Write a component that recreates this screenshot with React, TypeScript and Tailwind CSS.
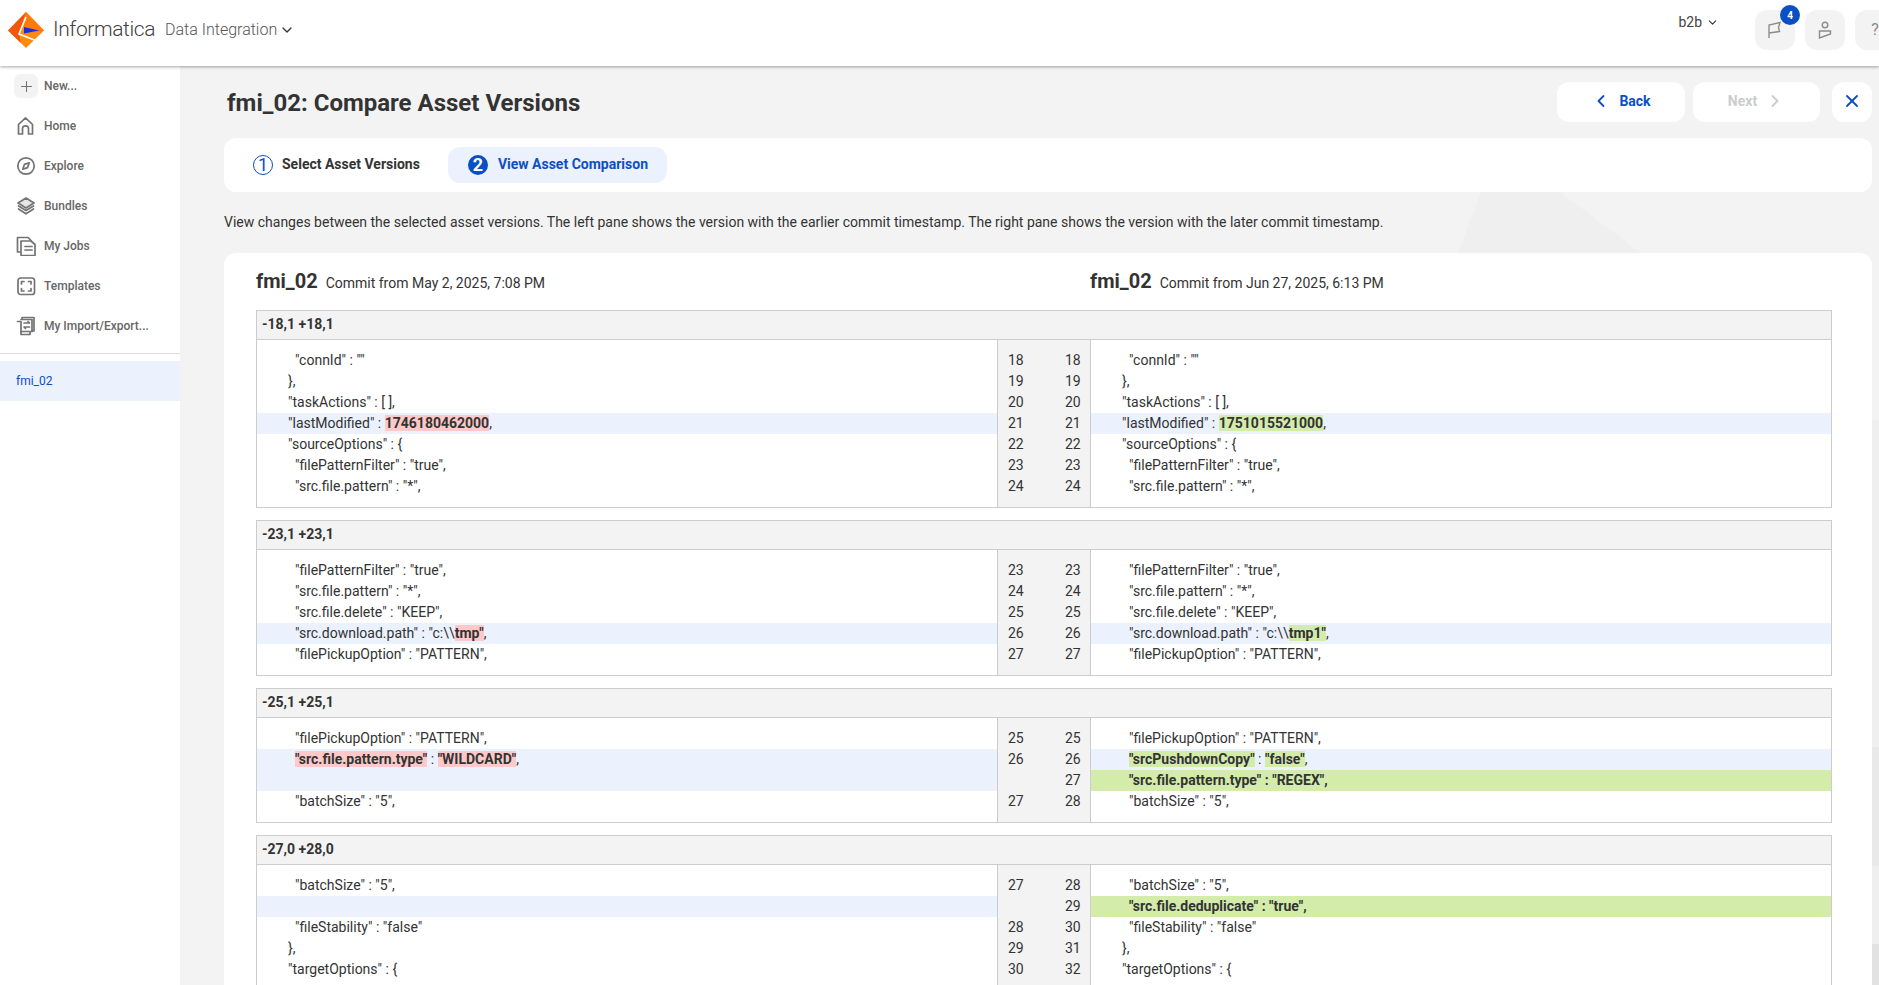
import { ChevronDown, ChevronLeft, ChevronRight, Plus, X } from "lucide-react";
import type { ReactNode } from "react";

const D = ({ children }: { children: ReactNode }) => (
  <span className="bg-[#ffc9c9] font-bold">{children}</span>
);
const A = ({ children }: { children: ReactNode }) => (
  <span className="bg-[#d3ecaa] font-bold">{children}</span>
);

type Row = {
  l?: ReactNode;
  r?: ReactNode;
  ln?: number;
  rn?: number;
  indent?: boolean;
  changed?: boolean;
  added?: boolean;
};

type Hunk = { title: string; rows: Row[] };

const hunks: Hunk[] = [
  {
    title: "-18,1 +18,1",
    rows: [
      { l: '"connId" : ""', r: '"connId" : ""', ln: 18, rn: 18, indent: true },
      { l: "},", r: "},", ln: 19, rn: 19 },
      { l: '"taskActions" : [ ],', r: '"taskActions" : [ ],', ln: 20, rn: 20 },
      {
        l: (
          <>
            "lastModified" : <D>1746180462000</D>,
          </>
        ),
        r: (
          <>
            "lastModified" : <A>1751015521000</A>,
          </>
        ),
        ln: 21,
        rn: 21,
        changed: true,
      },
      { l: '"sourceOptions" : {', r: '"sourceOptions" : {', ln: 22, rn: 22 },
      { l: '"filePatternFilter" : "true",', r: '"filePatternFilter" : "true",', ln: 23, rn: 23, indent: true },
      { l: '"src.file.pattern" : "*",', r: '"src.file.pattern" : "*",', ln: 24, rn: 24, indent: true },
    ],
  },
  {
    title: "-23,1 +23,1",
    rows: [
      { l: '"filePatternFilter" : "true",', r: '"filePatternFilter" : "true",', ln: 23, rn: 23, indent: true },
      { l: '"src.file.pattern" : "*",', r: '"src.file.pattern" : "*",', ln: 24, rn: 24, indent: true },
      { l: '"src.file.delete" : "KEEP",', r: '"src.file.delete" : "KEEP",', ln: 25, rn: 25, indent: true },
      {
        l: (
          <>
            "src.download.path" : "c:\\<D>tmp"</D>,
          </>
        ),
        r: (
          <>
            "src.download.path" : "c:\\<A>tmp1"</A>,
          </>
        ),
        ln: 26,
        rn: 26,
        indent: true,
        changed: true,
      },
      { l: '"filePickupOption" : "PATTERN",', r: '"filePickupOption" : "PATTERN",', ln: 27, rn: 27, indent: true },
    ],
  },
  {
    title: "-25,1 +25,1",
    rows: [
      { l: '"filePickupOption" : "PATTERN",', r: '"filePickupOption" : "PATTERN",', ln: 25, rn: 25, indent: true },
      {
        l: (
          <>
            <D>"src.file.pattern.type"</D> : <D>"WILDCARD"</D>,
          </>
        ),
        r: (
          <>
            <A>"srcPushdownCopy"</A> : <A>"false"</A>,
          </>
        ),
        ln: 26,
        rn: 26,
        indent: true,
        changed: true,
      },
      { r: <b>"src.file.pattern.type" : "REGEX",</b>, rn: 27, indent: true, added: true },
      { l: '"batchSize" : "5",', r: '"batchSize" : "5",', ln: 27, rn: 28, indent: true },
    ],
  },
  {
    title: "-27,0 +28,0",
    rows: [
      { l: '"batchSize" : "5",', r: '"batchSize" : "5",', ln: 27, rn: 28, indent: true },
      { r: <b>"src.file.deduplicate" : "true",</b>, rn: 29, indent: true, added: true },
      { l: '"fileStability" : "false"', r: '"fileStability" : "false"', ln: 28, rn: 30, indent: true },
      { l: "},", r: "},", ln: 29, rn: 31 },
      { l: '"targetOptions" : {', r: '"targetOptions" : {', ln: 30, rn: 32 },
    ],
  },
];

function HunkTable({ hunk }: { hunk: Hunk }) {
  return (
    <div className="mb-3 border border-[#cccccc]">
      <div className="h-[29px] border-b border-[#cccccc] bg-[#f3f3f3] pl-[5px] text-[14px] leading-[27px] font-bold text-[#333333]">
        {hunk.title}
      </div>
      <div className="flex">
        <div className="w-[740px] py-[10px]">
          {hunk.rows.map((row, i) => (
            <div
              key={i}
              className={`h-[21px] whitespace-pre leading-[21px] ${row.indent ? "pl-[38px]" : "pl-[31px]"} ${
                row.changed || row.added ? "bg-[#ebf1fd]" : ""
              }`}
            >
              {row.l}
            </div>
          ))}
        </div>
        <div className="w-[94px] border-x border-[#cccccc] bg-[#f3f3f3] py-[10px]">
          {hunk.rows.map((row, i) => (
            <div key={i} className="flex h-[21px] pl-[10px] leading-[21px]">
              <span className="w-[57px]">{row.ln}</span>
              <span>{row.rn}</span>
            </div>
          ))}
        </div>
        <div className="flex-1 py-[10px]">
          {hunk.rows.map((row, i) => (
            <div
              key={i}
              className={`h-[21px] whitespace-pre leading-[21px] ${row.indent ? "pl-[38px]" : "pl-[31px]"} ${
                row.added ? "bg-[#d3ecaa]" : row.changed ? "bg-[#ebf1fd]" : ""
              }`}
            >
              {row.r}
            </div>
          ))}
        </div>
      </div>
    </div>
  );
}

function Logo() {
  return (
    <svg width="36" height="36" viewBox="0 0 36 36" className="shrink-0">
      <polygon points="18,0 0,18.5 18,36 36,18.5" fill="#ff8a12" />
      <polygon points="18,0 0,18.5 13,31 11,22" fill="#f2560a" />
      <polygon points="18,0 36,18.5 29,20 16,14" fill="#ff7a0c" />
      <polyline points="18,5 11,22 29,29" fill="none" stroke="#ffffff" strokeWidth="1.6" />
      <polygon points="16,15 31,18.6 16,21.5" fill="#1430e6" />
    </svg>
  );
}

const iconProps = {
  width: 20,
  height: 20,
  viewBox: "0 0 20 20",
  fill: "none",
  stroke: "#737373",
  strokeWidth: 1.7,
  strokeLinejoin: "round" as const,
  strokeLinecap: "round" as const,
};

const navItems: { label: string; icon: ReactNode }[] = [
  {
    label: "Home",
    icon: (
      <svg {...iconProps}>
        <path d="M2.5 18V8.5L9.5 1.8L16.5 8.5V18H12.5V12.5C12.5 10.8 11.2 9.8 9.5 9.8C7.8 9.8 6.5 10.8 6.5 12.5V18Z" />
      </svg>
    ),
  },
  {
    label: "Explore",
    icon: (
      <svg {...iconProps}>
        <circle cx="10" cy="10" r="8.2" />
        <path d="M13.2 6.8L11.6 11.6L6.8 13.2L8.4 8.4Z" />
      </svg>
    ),
  },
  {
    label: "Bundles",
    icon: (
      <svg {...iconProps}>
        <path d="M10 2L18 7L10 12L2 7Z" fill="#e6e6e6" />
        <path d="M2.5 10L10 14.5L17.5 10" />
        <path d="M2.5 13L10 17.8L17.5 13" />
      </svg>
    ),
  },
  {
    label: "My Jobs",
    icon: (
      <svg {...iconProps}>
        <path d="M4 16H1.5V1.5H12L15 4.5" />
        <path d="M5 5H15L19 8.5V19.5H5Z" />
        <path d="M9 10.5H16M9 14H16" />
      </svg>
    ),
  },
  {
    label: "Templates",
    icon: (
      <svg {...iconProps}>
        <rect x="2" y="2" width="16.5" height="16.5" rx="2.5" />
        <path d="M5.5 8V5.5H8M12.5 5.5H15V8M15 12.5V15H12.5M8 15H5.5V12.5" />
      </svg>
    ),
  },
  {
    label: "My Import/Export...",
    icon: (
      <svg {...iconProps}>
        <path d="M6 3V1.5H18V15H16" />
        <path d="M1.5 5.5H5V18.5H14V16" />
        <path d="M5 3.5H16V15.5H5" />
        <path d="M8 7H13.5L12 5.5M13.5 11H8L9.5 12.5" />
      </svg>
    ),
  },
];

function Sidebar() {
  return (
    <aside className="flex w-[180px] shrink-0 flex-col bg-white text-[12px] font-medium text-[#666666]">
      <div className="flex h-[40px] items-center pl-[14px]">
        <div className="flex h-[24px] w-[24px] items-center justify-center rounded-[6px] bg-[#f3f3f3]">
          <Plus size={17} strokeWidth={1.5} color="#737373" />
        </div>
        <span className="ml-[6px]">New...</span>
      </div>
      {navItems.map((item) => (
        <div key={item.label} className="flex h-[40px] items-center pl-[16px]">
          <span className="w-[28px]">{item.icon}</span>
          <span>{item.label}</span>
        </div>
      ))}
      <div className="mt-[7px] h-[1px] bg-[#dddddd]" />
      <div className="mt-[7px] flex h-[40px] items-center bg-[#ebf1fd] pl-[16px] font-normal text-[#0b4fc4]">
        fmi_02
      </div>
    </aside>
  );
}

function Header() {
  return (
    <header className="relative z-10 flex h-[66px] shrink-0 items-start overflow-hidden bg-white shadow-[0_1px_3px_rgba(0,0,0,0.35)]">
      <div className="mt-[12px] ml-[8px]">
        <Logo />
      </div>
      <span className="mt-[14px] ml-[9px] text-[21px] leading-[30px] font-light tracking-[-0.4px] text-[#3f3f3f]">
        Informatica
      </span>
      <div className="mt-[19px] ml-[10px] flex items-center text-[16px] leading-[22px] font-light text-[#555555]">
        Data Integration
        <ChevronDown size={16} strokeWidth={2} className="ml-[2px] text-[#333333]" />
      </div>
      <div className="mt-[12px] ml-auto flex items-center text-[14px] leading-[20px] text-[#444444]">
        b2b
        <ChevronDown size={13} strokeWidth={2} className="ml-[4px] text-[#333333]" />
      </div>
      <div className="relative mt-[10px] ml-[36px] flex h-[40px] w-[40px] shrink-0 items-center justify-center rounded-[12px] bg-[#f3f3f3]">
        <svg width="14" height="18" viewBox="0 0 14 18" fill="none" stroke="#8c8c8c" strokeWidth="1.4">
          <path d="M1 17V4L12 1.5L10.5 6.5L11.5 10.5L1 12" />
        </svg>
        <div className="absolute -top-[5px] -right-[5px] flex h-[20px] w-[20px] items-center justify-center rounded-full bg-[#0b4fc4] text-[10px] font-bold text-white">
          4
        </div>
      </div>
      <div className="mt-[10px] ml-[10px] flex h-[40px] w-[40px] shrink-0 items-center justify-center rounded-[12px] bg-[#f3f3f3]">
        <svg width="14" height="18" viewBox="0 0 14 18" fill="none" stroke="#8c8c8c" strokeWidth="1.4">
          <circle cx="7" cy="4" r="2.8" />
          <path d="M1.5 17V10H12.5L12.5 13Z" />
        </svg>
      </div>
      <div className="mt-[10px] mr-[-16px] ml-[10px] flex h-[40px] w-[40px] shrink-0 items-center justify-center rounded-[12px] bg-[#f3f3f3] text-[16px] text-[#8c8c8c]">
        ?
      </div>
    </header>
  );
}

export default function App() {
  return (
    <div className="flex h-[985px] w-full flex-col overflow-hidden bg-[#f3f3f3] font-['Roboto',sans-serif] text-[14px] text-[#333333]">
      <Header />
      <div className="flex min-h-0 flex-1">
        <Sidebar />
        <main className="relative min-w-0 flex-1 overflow-hidden pr-[7px] pl-[44px]">
          {/* faint background shapes behind the cards */}
          <svg className="absolute top-[126px] left-[1278px]" width="183" height="61" viewBox="0 0 183 61">
            <polygon points="23,0 102,0 183,61 0,61" fill="#efefef" />
          </svg>
          <div className="absolute top-[354px] right-0 bottom-0 flex w-[7px] flex-col bg-[#efefef]">
            <div className="mt-[327px] h-[119px] bg-[#e9e9e9]" />
            <div className="mt-[78px] h-[41px] bg-[#e2e2e2]" />
          </div>
          <div className="relative">
            <div className="flex h-[72px]">
              <h1 className="mt-[19px] ml-[3px] text-[24px] leading-[36px] font-bold text-[#333333]">
                fmi_02: Compare Asset Versions
              </h1>
              <div className="mt-[16px] ml-auto flex leading-[18px] font-bold">
                <button className="mr-[8px] flex h-[40px] w-[128px] items-center justify-center gap-[8px] rounded-[12px] bg-white pb-[2px] text-[#0b4fc4]">
                  <ChevronLeft size={20} strokeWidth={2.2} />
                  Back
                </button>
                <button className="mr-[12px] flex h-[40px] w-[127px] items-center justify-center gap-[8px] rounded-[12px] bg-white pb-[2px] text-[#cccccc]">
                  Next
                  <ChevronRight size={20} strokeWidth={2.2} />
                </button>
                <button className="flex h-[40px] w-[40px] items-center justify-center rounded-[12px] bg-white pb-[2px] text-[#0b4fc4]">
                  <X size={20} strokeWidth={2.2} />
                </button>
              </div>
            </div>
            <div className="flex h-[54px] items-center rounded-[12px] bg-white font-bold">
              <div className="ml-[29px] flex items-center">
                <span className="flex h-[20px] w-[20px] items-center justify-center rounded-full border-[1.5px] border-[#0b4fc4] text-[18px] leading-none font-normal text-[#0b4fc4]">
                  1
                </span>
                <span className="ml-[9px] pb-[2px]">Select Asset Versions</span>
              </div>
              <div className="ml-[28px] flex h-[36px] w-[219px] items-center rounded-[12px] bg-[#ebf1fd] pl-[20px] text-[#0b4fc4]">
                <span className="flex h-[20px] w-[20px] items-center justify-center rounded-full bg-[#0b4fc4] text-[18px] leading-none text-white">
                  2
                </span>
                <span className="ml-[10px] pb-[2px]">View Asset Comparison</span>
              </div>
            </div>
            <p className="flex h-[61px] items-center">
              View changes between the selected asset versions. The left pane shows the version with the earlier commit
              timestamp. The right pane shows the version with the later commit timestamp.
            </p>
            <div className="rounded-t-[12px] bg-white pt-[14px] pr-[40px] pl-[32px]">
              <div className="mb-[2px] flex h-[41px] items-start">
                <div className="flex w-[834px] items-center">
                  <span className="text-[20px] leading-[28px] font-bold">fmi_02</span>
                  <span className="mt-[5px] ml-[8px]">Commit from May 2, 2025, 7:08 PM</span>
                </div>
                <div className="flex items-center">
                  <span className="text-[20px] leading-[28px] font-bold">fmi_02</span>
                  <span className="mt-[5px] ml-[8px]">Commit from Jun 27, 2025, 6:13 PM</span>
                </div>
              </div>
              {hunks.map((h) => (
                <HunkTable key={h.title} hunk={h} />
              ))}
            </div>
          </div>
        </main>
      </div>
    </div>
  );
}
